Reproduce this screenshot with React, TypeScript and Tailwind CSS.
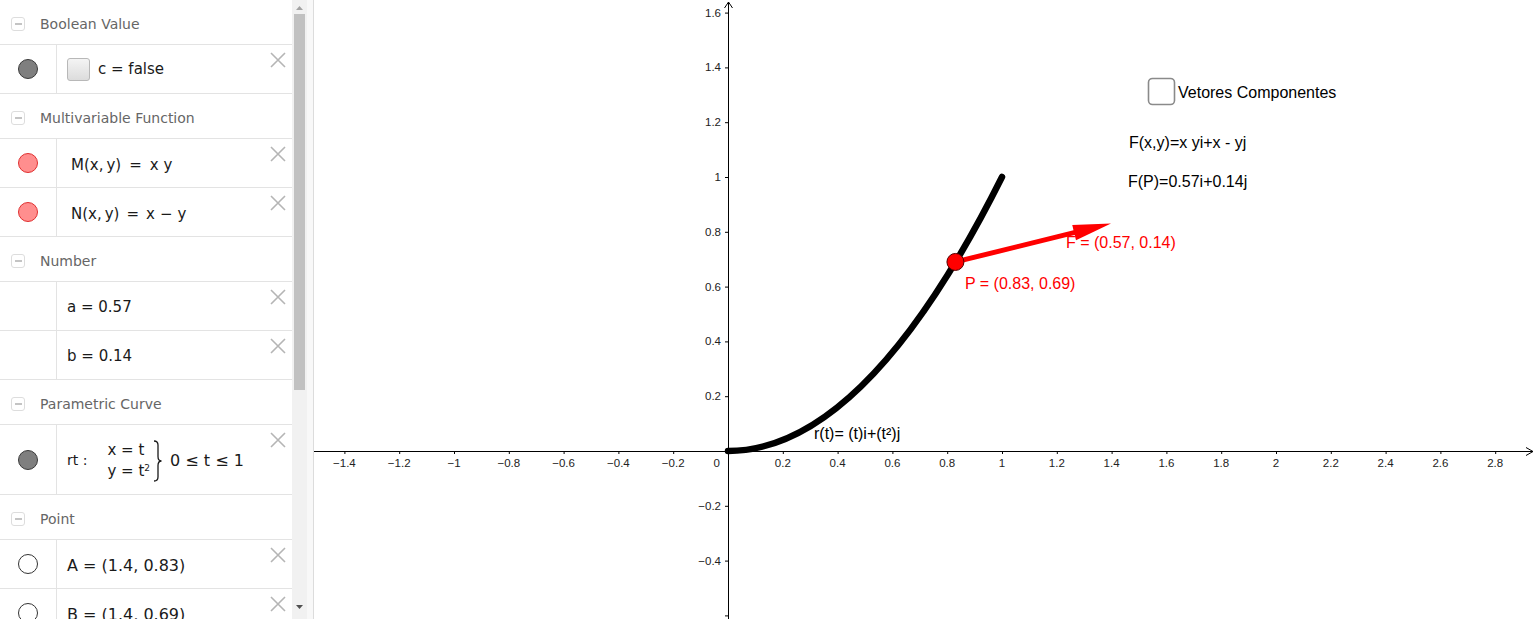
import React from "react";

const MINUS = "\u2212";

function Collapse() {
  return (
    <div className="ml-[11px] w-[14px] h-[14px] rounded-[3px] border border-[#dddddd] flex items-center justify-center shrink-0">
      <div className="w-[7px] h-[1.5px] bg-[#c4c4c4]" />
    </div>
  );
}

function Header({ title }: { title: string }) {
  return (
    <div className="h-[45px] flex items-center pt-[4px] border-b border-[#e3e3e3]">
      <Collapse />
      <span className="ml-[15px] text-[14px] text-[#666666]">{title}</span>
    </div>
  );
}

function XIcon() {
  return (
    <svg width="16" height="16" viewBox="0 0 16 16" className="absolute right-[6px] top-[7px]">
      <path d="M1 1 L15 15 M15 1 L1 15" stroke="#b5b5b5" strokeWidth="1.6" fill="none" />
    </svg>
  );
}

type MarbleKind = "grey" | "red" | "empty" | "none";

function Marble({ kind }: { kind: MarbleKind }) {
  if (kind === "none") return null;
  if (kind === "grey")
    return <div className="w-[20px] h-[20px] rounded-full bg-[#7f7f7f] border border-[#3a3a3a]" />;
  if (kind === "red")
    return <div className="w-[20px] h-[20px] rounded-full bg-[#ff8e8e] border border-[#e03030]" />;
  return <div className="w-[20px] h-[20px] rounded-full bg-white border border-[#333333]" />;
}

function Item({
  kind,
  tall,
  pad,
  children,
}: {
  kind: MarbleKind;
  tall?: boolean;
  pad?: string;
  children: React.ReactNode;
}) {
  return (
    <div className={(tall ? "h-[70px]" : "h-[49px]") + " relative flex border-b border-[#e3e3e3]"}>
      <div className="w-[57px] shrink-0 border-r border-[#e3e3e3] flex items-center justify-center">
        <Marble kind={kind} />
      </div>
      <div className={(pad ?? "pl-[10px] pt-[2px]") + " flex-1 flex items-center text-[15px] text-[#1a1a1a]"}>
        {children}
      </div>
      <XIcon />
    </div>
  );
}

function Brace() {
  return (
    <svg width="10" height="42" viewBox="0 0 10 42" className="ml-[3px] mr-[7px]">
      <path
        d="M1 1 Q5 1 5 5 L5 16.5 Q5 21 8.5 21 Q5 21 5 25.5 L5 37 Q5 41 1 41"
        stroke="#1a1a1a"
        strokeWidth="1.3"
        fill="none"
      />
    </svg>
  );
}

function AlgebraView() {
  return (
    <div className="w-[292px] h-full overflow-hidden bg-white" style={{ fontFamily: '"DejaVu Sans", sans-serif' }}>
      <Header title="Boolean Value" />
      <Item kind="grey" pad="pl-[10px] pt-[0px]">
        <div className="w-[23px] h-[23px] rounded-[3px] border border-[#b8b8b8] bg-gradient-to-b from-[#f4f4f4] to-[#dcdcdc]" />
        <span className="ml-[8px]">c = false</span>
      </Item>
      <Header title="Multivariable Function" />
      <Item kind="red" pad="pl-[14px] pt-[4px]">
        <span>
          M(x,&thinsp;y)<span className="mx-[8px]">=</span>x y
        </span>
      </Item>
      <Item kind="red" pad="pl-[14px] pt-[4px]">
        <span>
          N(x,&thinsp;y)<span className="mx-[7px]">=</span>x<span className="mx-[5px]">{MINUS}</span>y
        </span>
      </Item>
      <Header title="Number" />
      <Item kind="none">
        <span>a = 0.57</span>
      </Item>
      <Item kind="none">
        <span>b = 0.14</span>
      </Item>
      <Header title="Parametric Curve" />
      <Item kind="grey" tall pad="pl-[10px] pt-[2px]">
        <span className="text-[14px]">rt :</span>
        <div className="ml-[20px] flex flex-col text-[15px] leading-[21px]">
          <span>x = t</span>
          <span>
            y = t<sup className="text-[9px]">2</sup>
          </span>
        </div>
        <Brace />
        <span className="text-[16px]">0 ≤ t ≤ 1</span>
      </Item>
      <Header title="Point" />
      <Item kind="empty" pad="pl-[10px] pt-[4px]">
        <span className="text-[16px]">A = (1.4, 0.83)</span>
      </Item>
      <Item kind="empty" pad="pl-[10px] pt-[4px]">
        <span className="text-[16px]">B = (1.4, 0.69)</span>
      </Item>
    </div>
  );
}

function Scrollbar() {
  return (
    <div className="w-[15px] h-full bg-[#f1f1f1] flex flex-col items-center">
      <svg width="7" height="4" viewBox="0 0 7 4" className="mt-[6px]">
        <path d="M0 4 L3.5 0 L7 4 Z" fill="#a3a3a3" />
      </svg>
      <div className="mt-[4px] w-[11px] h-[376px] bg-[#c1c1c1]" />
      <div className="flex-1" />
      <svg width="7" height="4" viewBox="0 0 7 4" className="mb-[10px]">
        <path d="M0 0 L7 0 L3.5 4 Z" fill="#505050" />
      </svg>
    </div>
  );
}

const OX = 728;
const OY = 451;
const U = 274;

function fmt(v: number) {
  const s = Number(v.toFixed(1)).toString();
  return s.startsWith("-") ? MINUS + s.slice(1) : s;
}

function Graphics() {
  const xs: number[] = [];
  for (let k = -7; k <= 14; k++) if (k !== 0) xs.push(k);
  const ys: number[] = [];
  for (let k = -3; k <= 8; k++) if (k !== 0) ys.push(k);

  const P = { x: OX + 0.83 * U, y: OY - 0.69 * U };
  const tip = { x: 1111, y: 223.5 };
  const dx = tip.x - P.x;
  const dy = tip.y - P.y;
  const len = Math.hypot(dx, dy);
  const ux = dx / len;
  const uy = dy / len;
  const hl = 38;
  const hw = 7.8;
  const bx = tip.x - ux * hl;
  const by = tip.y - uy * hl;
  const nx = -uy;
  const ny = ux;
  const head = `${tip.x},${tip.y} ${bx + nx * hw},${by + ny * hw} ${bx - nx * hw},${by - ny * hw}`;

  const font = '"Liberation Sans", Arial, sans-serif';

  return (
    <div className="flex-1 h-full relative bg-white">
      <svg className="absolute inset-0" width="1222" height="619" viewBox="314 0 1222 619" fontFamily={font}>
        <line x1="314" y1={OY + 0.5} x2="1533" y2={OY + 0.5} stroke="#000" strokeWidth="1" />
        <polyline points={`1526,${OY - 3.5} 1533,${OY + 0.5} 1526,${OY + 4.5}`} stroke="#000" fill="none" strokeWidth="1" />
        <line x1={OX + 0.5} y1="619" x2={OX + 0.5} y2="2" stroke="#000" strokeWidth="1" />
        <polyline points={`${OX - 3.5},8 ${OX + 0.5},2 ${OX + 4.5},8`} stroke="#000" fill="none" strokeWidth="1" />

        {xs.map((k) => {
          const x = OX + k * 0.2 * U;
          return (
            <g key={"x" + k}>
              <line x1={x + 0.5} y1={OY} x2={x + 0.5} y2={OY + 3} stroke="#000" strokeWidth="1" />
              <text x={x} y={OY + 16} fontSize="11.5" textAnchor="middle" fill="#222">
                {fmt(k * 0.2)}
              </text>
            </g>
          );
        })}
        {ys.map((k) => {
          const y = OY - k * 0.2 * U;
          return (
            <g key={"y" + k}>
              <line x1={OX - 3} y1={y + 0.5} x2={OX} y2={y + 0.5} stroke="#000" strokeWidth="1" />
              {k > -3 && (
                <text x={OX - 7} y={y + 4} fontSize="11.5" textAnchor="end" fill="#222">
                  {fmt(k * 0.2)}
                </text>
              )}
            </g>
          );
        })}
        <text x={OX - 8} y={OY + 16} fontSize="11.5" textAnchor="end" fill="#222">
          0
        </text>

        <path
          d={`M${OX},${OY} Q${OX + 0.5 * U},${OY} ${OX + U},${OY - U}`}
          stroke="#000"
          strokeWidth="6.5"
          fill="none"
          strokeLinecap="round"
        />

        <line x1={P.x} y1={P.y} x2={bx + ux * 2} y2={by + uy * 2} stroke="#ff0000" strokeWidth="5" />
        <polygon points={head} fill="#ff0000" />
        <circle cx={P.x} cy={P.y} r="8.5" fill="#ff0000" stroke="#550000" strokeWidth="1" />

        <text x="1066" y="248" fontSize="16" fill="#ff0000">
          F = (0.57, 0.14)
        </text>
        <text x="965" y="289" fontSize="16" fill="#ff0000">
          P = (0.83, 0.69)
        </text>
        <text x="814" y="439" fontSize="16" fill="#000">
          r(t)= (t)i+(t²)j
        </text>

        <rect x="1148.5" y="78.5" width="26" height="26" rx="4" fill="#fff" stroke="#8a8a8a" strokeWidth="1.6" />
        <text x="1178" y="98" fontSize="16" fill="#000">
          Vetores Componentes
        </text>
        <text x="1129" y="148" fontSize="16" fill="#000">
          F(x,y)=x yi+x - yj
        </text>
        <text x="1128" y="187" fontSize="16" fill="#000">
          F(P)=0.57i+0.14j
        </text>
      </svg>
    </div>
  );
}

export default function App() {
  return (
    <div className="flex w-[1536px] h-[619px] overflow-hidden bg-white">
      <AlgebraView />
      <Scrollbar />
      <div className="w-[7px] h-full bg-[#f8f8f8] border-r border-[#dcdcdc]" />
      <Graphics />
    </div>
  );
}
